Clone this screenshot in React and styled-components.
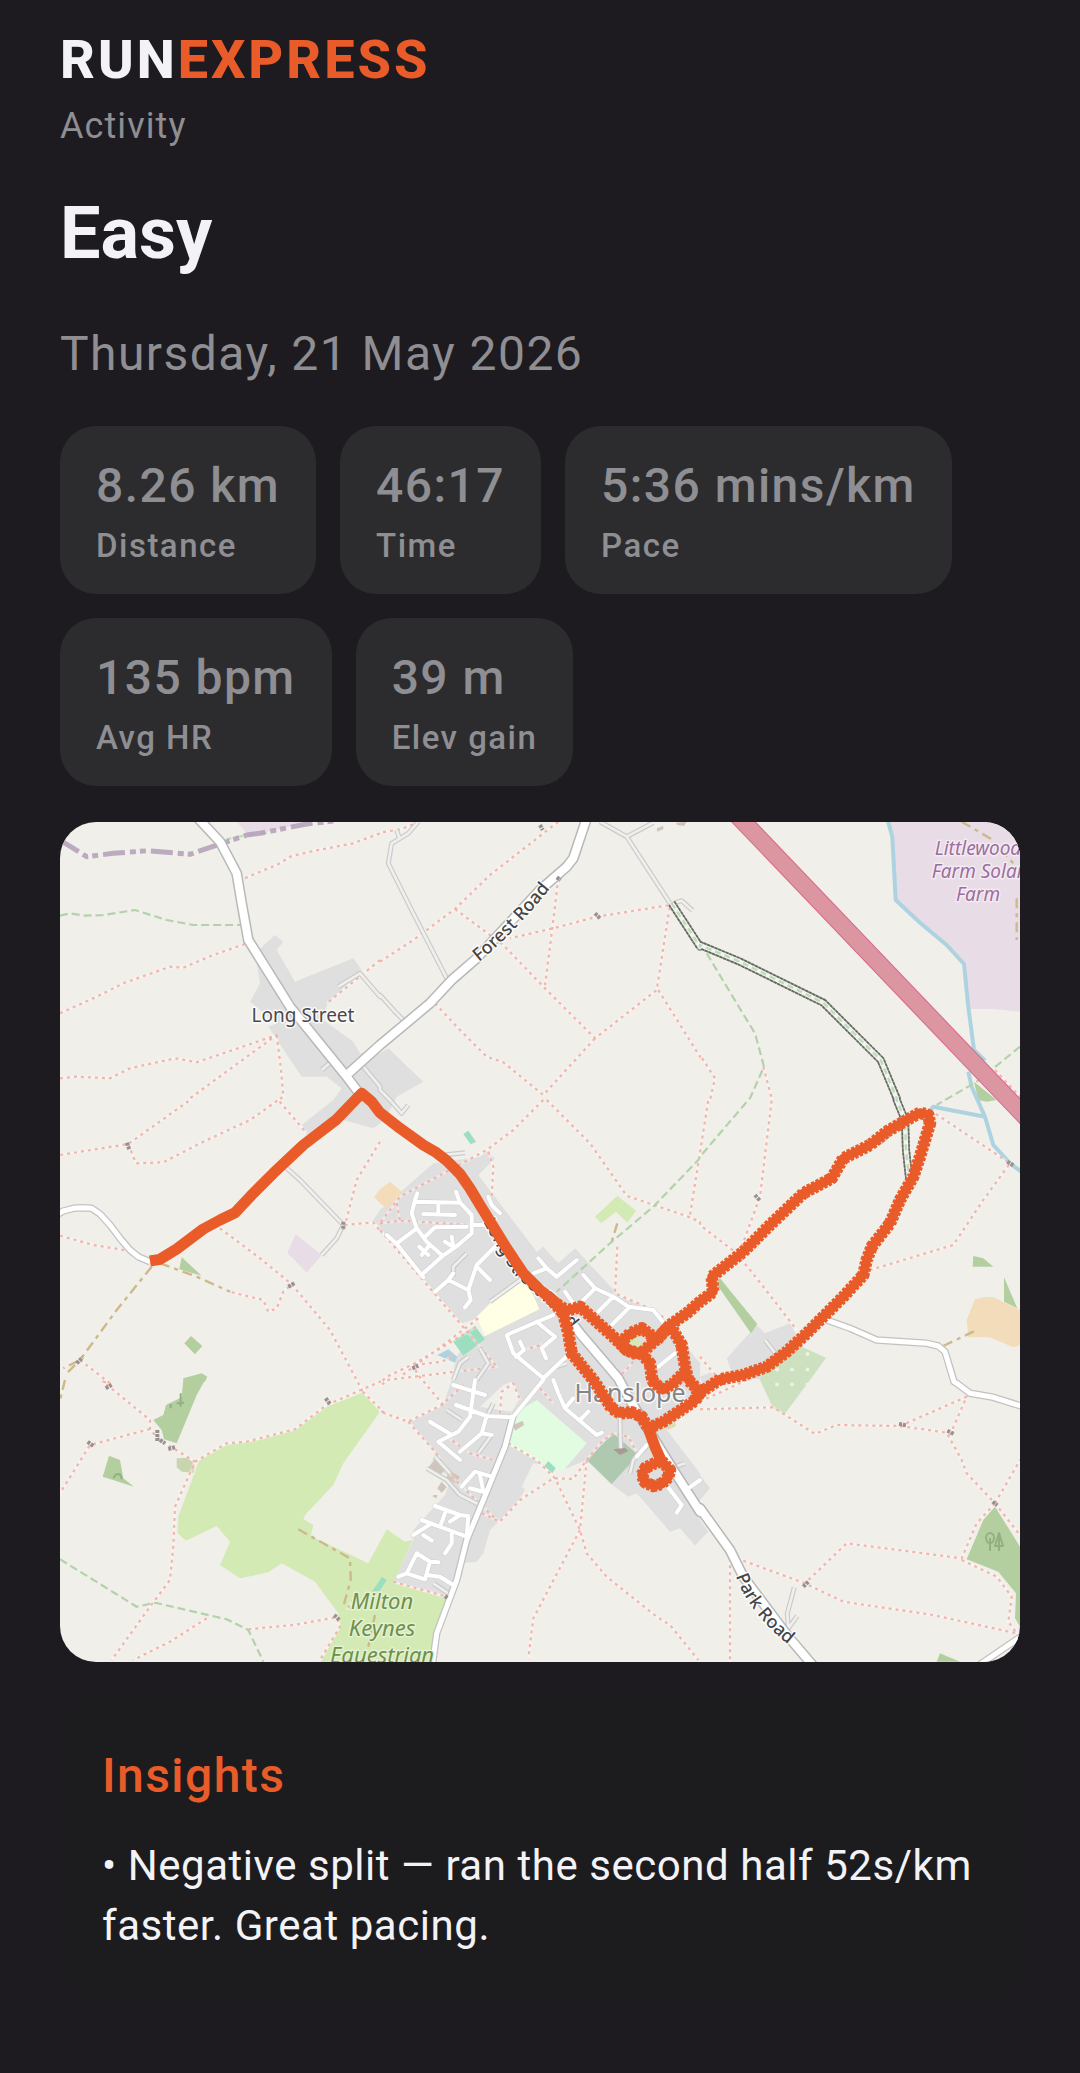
import React from "react";
import styled, { createGlobalStyle } from "styled-components";

const color = {
  page: "#1e1b20",
  chip: "#2c2c2e",
  panel: "#1c1c1e",
  text: "#f2f2f7",
  muted: "#8e8e93",
  accent: "#e95b29",
};

const GlobalStyle = createGlobalStyle`
  * { box-sizing: border-box; }
  body {
    margin: 0;
    background: ${color.page};
    color: ${color.text};
    font-family: Roboto, "Liberation Sans", sans-serif;
  }
  h1, h2, p, dl, dd, dt { margin: 0; font-weight: inherit; }
`;

const Page = styled.main`
  display: flex;
  flex-direction: column;
  gap: 36px;
  padding: 24px 60px 72px;
`;

const Header = styled.header`
  display: flex;
  flex-direction: column;
  gap: 6px;
`;

const Brand = styled.p`
  && { font-weight: 800; }
  font-size: 54px;
  line-height: 72px;
  letter-spacing: 3px;
`;

const BrandAccent = styled.span`
  color: ${color.accent};
`;

const Section = styled.p`
  color: ${color.muted};
  font-size: 36px;
  line-height: 48px;
  letter-spacing: 0.03em;
`;

const Title = styled.h1`
  && { font-weight: 700; }
  font-size: 72px;
  line-height: 96px;
`;

const DateLine = styled.p`
  color: ${color.muted};
  font-size: 48px;
  line-height: 72px;
  letter-spacing: 0.03em;
`;

const Stats = styled.dl`
  display: flex;
  flex-wrap: wrap;
  gap: 24px;
`;

const Stat = styled.div`
  display: flex;
  flex-direction: column-reverse;
  padding: 24px 36px;
  border-radius: 36px;
  background: ${color.chip};
  color: ${color.muted};
`;

const StatValue = styled.dd`
  && { font-weight: 500; }
  font-size: 48px;
  line-height: 72px;
  letter-spacing: 0.03em;
`;

const StatLabel = styled.dt`
  && { font-weight: 500; }
  font-size: 33px;
  line-height: 48px;
  letter-spacing: 0.045em;
`;

const MapFrame = styled.figure`
  margin: 0;
  border-radius: 36px;
  overflow: hidden;
  background: #f0efe9;
`;

const MapDrawing = styled.svg`
  display: block;
  width: 100%;
  height: auto;
  fill: none;
  stroke-linejoin: round;
`;

const Place = styled.text`
  font-family: "Noto Sans", "Open Sans", sans-serif;
  font-size: ${(p) => p.$size}px;
  font-style: ${(p) => (p.$italic ? "italic" : "normal")};
  font-weight: ${(p) => (p.$road ? 500 : 400)};
  fill: ${(p) => p.$ink};
  stroke: ${(p) => p.$halo || "#ffffffcc"};
  stroke-width: 3px;
  paint-order: stroke;
`;

const Insights = styled.section`
  display: flex;
  flex-direction: column;
  gap: 24px;
  padding: 42px;
  border-radius: 36px;
  background: ${color.panel};
`;

const InsightsTitle = styled.h2`
  && { font-weight: 500; }
  color: ${color.accent};
  font-size: 48px;
  line-height: 72px;
  letter-spacing: 0.03em;
`;

const Insight = styled.p`
  font-size: 42px;
  line-height: 60px;
  letter-spacing: 0.013em;
`;

/* The map is surveyed on nine sheets, each in thirds of a map unit.
   A letter in a trace switches the sheet that the points after it are on. */
const sheets = {
  A: [0, -2], B: [320, -2], C: [640, -2],
  D: [0, 278], E: [320, 278], F: [640, 278],
  G: [0, 558], H: [320, 558], I: [640, 558],
};

function trace(source, closed) {
  let origin = sheets.A;
  const points = [];
  source.trim().split(/\s+/).forEach((word) => {
    if (sheets[word]) {
      origin = sheets[word];
      return;
    }
    const [x, y] = word.split(",").map(Number);
    points.push(`${Math.round(origin[0] * 10 + (x * 10) / 3) / 10} ${Math.round(origin[1] * 10 + (y * 10) / 3) / 10}`);
  });
  return `M${points.join("L")}${closed ? "Z" : ""}`;
}

const many = (list, closed) => list.map((s) => trace(s, closed)).join("");

const areas = [
  ["#dfdfdf", [
    "A 645,345 670,365 650,390 705,485 880,415 905,450 800,555 790,600 880,665 900,700 960,700 B 25,685 130,785 50,830 D 975,60 940,85 850,60 740,105 725,75 820,0 A 845,805 800,770 725,770 625,620 650,610 570,545 600,490 585,400",
    "D 940,360 E 0,330 160,190 300,170 320,155 345,175 295,225 470,455 490,440 535,490 585,445 720,590 830,630 960,790 H 960,30 860,150 960,280 I 0,285 30,325 0,360 0,420 25,455 0,480 H 945,497 900,445 870,455 770,340 745,350 690,310 620,240 560,265 460,250 425,320 435,330 410,370 330,450 310,520 290,545 245,550 205,650 40,605 100,480 100,450 195,345 215,290 150,260 165,220 90,125 190,75 215,0 E 230,770 250,740 320,705 295,655 245,670 30,420",
    "F 80,775 170,675 195,700 270,670 310,740 200,840 100,830",
    "F 0,830 35,815 45,840 10,860",
  ]],
  ["#f0efe9", ["H 300,80 370,15 395,5 420,55 395,95"]],
  ["#e8dce6", [
    "C 568,0 960,0 960,575 880,567 810,567 805,500 790,430 585,240 580,60",
    "A 530,5 740,5 650,30 565,45",
    "D 707,403 785,465 740,518 682,458",
  ]],
  ["#d3eab5", [
    "G 908,38 960,95 850,250 820,315 735,405 730,418 760,435 752,468 925,550 960,485 H 20,448 75,485 98,480 40,608 198,655 160,850 G 780,850 840,740 835,700 765,605 665,550 625,577 540,595 480,555 510,485 470,438 420,462 378,482 352,458 355,410 418,240 500,195 600,180 705,150 800,80",
    "E 712,287 768,332 742,368 708,335 664,370 645,350",
  ]],
  ["#b3cfa0", [
    "D 365,472 425,527 358,508", "D 393,708 427,738 405,763 373,730",
    "G 370,0 435,0 410,45 350,190 312,178 305,150 280,120 310,105 318,75 365,52", "D 370,835 425,820 442,830 435,845 370,845",
    "G 147,227 180,240 190,295 222,320 128,290",
    "F 60,535 172,672 153,700 48,550", "F 820,468 850,475 880,500 818,500", "F 912,532 952,625 912,605",
    "I 885,380 960,500 960,740 945,715 948,640 895,575 800,538 850,420", "I 720,820 780,845 710,845",
    "C 822,785 890,840 860,845 835,840",
  ]],
  ["#c9d5ae", ["G 350,235 385,233 405,255 400,278 365,275 350,262"]],
  ["#cde0c0", ["F 300,738 378,773 330,840 I 252,105 220,85 180,0 F 185,825"]],
  ["#f2dcba", ["F 825,598 860,590 880,592 960,630 960,735 940,742 870,712 805,712 800,660", "D 960,270 942,290 960,310 E 20,325 68,278 30,245 -10,275"]],
  ["#ffffe5", ["E 290,650 330,610 345,590 425,540 460,585 478,628 315,708"]],
  ["#e2fce1", ["H 470,60 620,190 550,272 520,270 385,195 405,100"]],
  ["#afc9b0", ["H 700,160 775,225 695,312 620,240"]],
  ["#9ddec1", ["E 285,678 315,718 250,767 218,723", "E 265,92 288,125 272,133 250,102", "H 505,243 527,265 517,280 493,258", "G 960,600 935,635 960,632 H 20,600 5,590"]],
  ["#b0d2de", ["E 172,765 205,748 232,770 225,788"]],
  ["#d0c4bb", [
    "H 170,235 200,265 180,285 145,262", "H 205,270 240,290 225,310 200,295", "H 185,305 200,322 185,338 172,325",
    "H 160,345 172,345 170,355 158,350", "H 400,135 428,122 432,135 405,152",
    "B 830,25 850,18 850,28 832,35", "B 888,8 920,5 912,18 892,15",
  ]],
  ["#ab9a90", ["H 700,208 735,203 745,213 720,225"]],
  ["#e2dcb0", ["H 860,138 885,125 888,138 865,150"]],
  ["#d3eab6", ["E 745,728 765,708 795,738 765,748"]],
];

const footpaths = [
  "A 555,175 600,155 650,135 695,108 760,93 880,70 960,40 B 0,38 60,28 110,10",
  "A 0,580 110,530 190,490 330,440 370,443 460,405 555,372",
  "A 0,775 50,770 150,775 210,745 345,715 410,727 650,645 390,835 D 390,0 205,132 0,165",
  "A 650,645 662,740 670,830 655,840 D 655,0 740,100",
  "D 205,132 228,190 310,187 430,125 570,60 655,0",
  "A 960,420 905,465 800,550", "B 0,425 100,360 225,267 330,165 535,5",
  "B 225,267 370,375 490,500 645,655 830,510 870,255 650,290 520,325 390,355",
  "B 535,175 515,340 495,495", "B 835,510 960,710 C 0,705 45,775 30,840 F 25,0 -5,190",
  "B 165,550 235,625 320,710 370,727 490,825 645,655", "E 490,0 400,90 320,150 60,290 0,370",
  "E 500,0 630,130 740,287 925,350 960,365 F 0,375 110,460 190,560 290,690",
  "E 955,190 930,345", "E 325,155 340,200 335,290", "E 712,440 705,580 820,630 860,660",
  "C 190,740 215,835 F 215,0 180,290 125,440",
  "D 960,125 890,240 855,375 940,367 965,400", "E 0,370 60,362 270,375", "E 50,310 60,362",
  "E 0,390 240,670 350,800 H 20,0 0,20",
  "D 0,407 100,435 205,452", "D 480,385 600,475 695,553 810,690 890,840 G 890,0 908,35",
  "D 515,577 610,600 625,635 650,625 670,575 695,553",
  "D 60,780 150,850 G 130,5 270,120 270,150 300,180 405,245 345,380 340,500 330,600 270,680 155,840",
  "G 270,147 90,195 0,340", "G 405,245 500,190 560,185 705,148 800,75 960,5 H 0,10 E 20,830 105,790 290,680",
  "G 908,35 970,95 H 0,95 85,125 185,75 250,15", "H 85,125 165,215 215,290 350,420",
  "E 295,655 150,765 60,830", "E 105,795 185,785 215,770", "H 190,75 110,-20 105,-40",
  "G 565,748 700,735 830,712 840,740 780,840", "G 440,715 330,785 220,840",
  "G 890,640 860,690", "H 40,605 200,650", "H 305,400 360,425 420,360 520,295 580,297 620,240 600,450 460,715 445,835",
  "H 385,190 470,240 525,295 600,450 620,520 680,590 830,710 870,735 955,840",
  "H 620,240 665,185 700,160 745,170 775,225",
  "H 360,100 365,35 400,10 420,60", "H 200,170 270,220 340,240",
  "I 0,88 220,82 345,162 410,135 600,138 740,158 785,240 800,280 885,370 960,465",
  "I 600,138 800,50 750,165", "I 885,370 960,240", "I 885,370 830,430 785,535 440,490 315,610",
  "I 90,535 90,850", "I 110,535 315,610 430,665 700,705 950,760 925,725 935,650 890,590 785,540",
  "F 690,30 930,190 850,300 760,435 510,510", "C 885,750 960,830", "F 0,770 50,830 I 0,65 140,0",
  "E 760,785 715,835", "H 480,25 520,70", "E 430,750 500,730",
];

const farmTracks = [
  "D 275,500 170,630 60,780 10,805", "D 300,490 410,530 510,575", "G 15,0 0,60", "D 45,795 20,820",
  "G 715,448 870,535 872,600 850,680", "G 945,705 925,800", "C 785,5 870,55 940,130", "C 950,235 950,360",
  "F 730,738 830,690", "E 712,370 695,425",
];

const bridleways = [
  "A 0,287 30,280 75,287 130,285 225,270 320,300 400,315 540,315",
  "C 20,400 110,550 165,640 192,740 150,835 F 145,0 0,170 E 955,180 820,320 690,430 530,575",
  "C 960,680 830,785 735,840 F 710,15",
  "G 0,538 230,680 285,668 500,718 565,750 610,845",
];

const lanes = [
  "B 115,5 85,40 35,70 25,130 100,280 200,475", "B 50,30 60,60", "A 835,500 900,460 960,530 B 0,525 45,575 70,600",
  "B 660,5 740,50 870,250", "B 740,50 820,8", "B 880,250 905,242 938,272",
  "D 680,205 720,240 850,375 830,415 785,465", "I 283,622 262,700 265,745 292,708",
  "A 910,740 960,800 B 0,810 30,840 E 65,40 85,15", "A 785,750 820,720", "E 190,165 255,158",
  "F 195,720 230,765", "E 260,460 220,500 220,530", "E 330,605 420,540", "H 165,230 210,280",
  "H 140,265 200,300 240,345 300,375", "H 200,90 245,120", "H 340,70 320,110", "H 295,220 335,165",
  "E 220,840 240,790 265,770", "E 290,840 325,790 300,745", "E 530,800 560,790", "H 750,280 760,240 805,195",
  "H 885,260 915,250", "H 720,110 722,205", "H 160,610 205,640",
];

const streets = [
  "E 112,280 105,300 95,340 110,385 50,430", "E 105,305 240,308 275,345 275,400 235,435 185,470 130,520",
  "E 228,275 240,308", "E 175,310 175,340", "E 130,342 225,345", "E 20,405 50,432 130,532", "E 110,385 140,425 185,465",
  "E 135,410 165,382 260,380", "E 275,375 320,375", "E 118,440 145,465", "E 125,465 145,440", "E 195,425 220,440 215,410",
  "E 350,435 290,495 265,570 205,540 165,575", "E 290,500 330,540", "E 205,540 220,520", "E 265,570 272,600 255,622",
  "E 325,290 335,315 360,340", "E 460,520 500,505 530,530 590,480", "E 475,475 500,505",
  "E 610,525 645,565 700,590 745,620 820,630 860,680", "E 645,565 600,610", "E 555,575 580,610", "E 700,590 655,635", "E 745,625 695,675",
  "E 885,760 835,800", "E 520,645 380,705 400,760 490,835 H 490,0 400,110",
  "E 470,665 525,710 485,745 498,775", "E 420,725 432,750 408,770", "E 490,835 570,760",
  "H 520,0 535,40 555,85 650,165 665,158", "H 555,85 580,55", "H 600,120 625,95",
  "H 220,15 315,45", "H 285,0 270,110 235,155 175,185 240,240", "H 228,75 320,108 395,112", "H 150,125 215,165",
  "H 320,108 305,160 240,215", "H 305,160 335,165",
  "H 335,290 285,275 245,320", "H 300,285 310,335 270,325", "H 165,378 240,405 265,408 260,470", "H 125,420 260,470",
  "H 195,400 180,440", "H 100,465 155,430", "H 130,465 155,482", "H 215,460 215,490 195,520", "H 240,405 210,425",
  "H 55,590 80,580 110,520 150,545 135,598 80,580", "H 150,545 175,547", "H 140,585 180,590 220,615",
  "H 855,310 905,375 890,398", "H 800,195 770,230", "H 925,325 960,300",
];

const tertiary = [
  "D -20,350 10,333 40,325 70,323 95,325 120,342 150,375 180,415 210,450 235,470 270,485",
  "F 380,660 450,685 530,720 680,730 715,738 735,755 762,845 I 770,10 810,40 880,52 970,80",
  "I 830,860 970,765",
  "H 400,105 375,200 310,360 260,480 230,600 170,760 155,870",
];

const mainRoads = [
  "A 405,-15 480,65 530,160 545,250 565,360 690,560 860,770 905,830",
  "A 860,765 B 0,675 150,550 215,480 290,415 480,210 560,140 580,115 620,-5",
  "E 540,620 600,700 715,835 H 750,60 880,270 960,395 I 0,385 90,510 130,590 265,770 350,870",
];

const streams = [
  "C 563,0 577,50 587,240 660,308 740,375 792,432 805,560 822,690 855,722",
  "C 805,755 815,800 835,845 F 855,50 880,135 930,190 970,220", "F 855,50 700,20 680,45", "F 600,75 540,130",
];

const stiles = [
  "B 480,15 488,30", "B 645,280 660,295", "B 530,172 542,180", "D 200,128 208,148", "D 685,560 705,548", "D 50,790 68,772",
  "D 850,365 850,390", "F 165,285 180,302", "F 922,185 942,197", "G 83,185 102,200", "G 292,150 292,185", "G 300,180 315,190",
  "G 325,207 345,202", "G 137,25 155,15", "G 797,55 810,72", "G 823,705 840,722", "I 597,132 620,136", "I 742,152 762,162",
  "I 878,365 892,376", "I 310,620 325,605", "E 97,805 115,797", "H 195,648 203,655",
];

const wood = ["G 332,72 332,85", "G 362,40 362,80", "G 350,70 372,68", "G 160,295 168,283 180,283 186,298"];

const sharpRoute = [
  "D 270,483 300,478 350,447 430,387 480,360 525,338 580,280 640,220 730,135 830,58 905,-20 935,5 E 0,38 60,85 130,135 165,155 200,182 240,222 270,265 300,315 340,380 380,445 430,520 480,570 530,610",
  "H 805,145 825,200 845,245",
];

const tickedRoute = [
  "E 510,595 550,640 565,700 575,760 640,840 H 650,15 695,85 720,100 755,97 785,110 805,145",
  "H 845,243 870,270 865,292 845,312 820,318 795,307 785,285 797,263 820,252 845,243",
  "H 805,145 850,125 945,62 955,30 925,0 E 915,800 905,735 870,675",
  "H 945,62 I 0,38 F 60,838 130,825 200,800 260,755 320,700 380,640 430,590 490,525 500,480 515,440 570,370 600,300 640,230 660,170 690,70 685,45 660,38 620,60 560,95 510,135 430,175 395,235 310,280 210,375 130,455 35,530 40,575 0,605 E 920,640 870,675 830,720",
  "E 870,675 830,718 785,758 770,763 740,750 722,728 750,700 785,685 830,718",
  "E 530,612 560,632 600,620 650,665 700,710 740,750 785,762 810,790 815,830 H 820,5 848,30 880,10 915,-25",
];

const orchardDots = [[747.5, 532], [732, 547.5], [747.5, 547.5], [717, 547.5], [717, 562.5], [732, 562.5], [747.5, 562.5]];

function RouteMap() {
  const main = many(mainRoads);
  const minor = many(tertiary);
  const side = many(streets);
  const lane = many(lanes);
  const paths = many(footpaths);
  const track = trace("B 875,250 960,380 C 0,375 120,425 370,548 542,720 590,835 F 590,0 615,60 618,150 628,240");
  const motorway = trace("C 105,-21 1100,1020");
  const sharp = many(sharpRoute);
  const ticked = many(tickedRoute);
  const boundary = trace("A 0,60 80,110 160,100 265,92 390,103 560,45 600,40 740,12 830,2");
  return (
    <MapFrame>
      <MapDrawing viewBox="0 0 960 840" role="img" aria-label="Route of the run around Hanslope">
        {areas.map(([fill, shapes]) => (
          <path key={fill} fill={fill} d={many(shapes, true)} />
        ))}
        {orchardDots.map(([x, y]) => (
          <circle key={`${x}-${y}`} cx={x} cy={y} r="2" fill="#e9f4e0" />
        ))}
        <path d={trace("A 620,38 560,45 500,58")} stroke="#bcdcae" strokeWidth="2" strokeDasharray="7 5" />
        <path d={boundary} stroke="#b39fb8" strokeWidth="5" strokeDasharray="22 5 6 4 6 5" opacity=".85" />
        <path d={many(streams)} stroke="#aed3e0" strokeWidth="4" />
        <path d={paths} stroke="#ffffff" strokeOpacity=".35" strokeWidth="3" />
        <path d={paths} stroke="#f3b4ab" strokeWidth="2.2" strokeDasharray="3 4" />
        <path d={many(farmTracks)} stroke="#cdb98a" strokeWidth="2.4" strokeDasharray="10 5 4 5" />
        <path d={many(bridleways)} stroke="#b2d3a9" strokeWidth="2.2" strokeDasharray="8 4" />
        <path d={lane} stroke="#cbcbcb" strokeWidth="5" />
        <path d={lane} stroke="#efefee" strokeWidth="2.6" />
        <path d={side} stroke="#cfcfcf" strokeWidth="5" strokeLinecap="round" />
        <path d={minor} stroke="#c2c2c2" strokeWidth="7.5" />
        <path d={main} stroke="#b8b8b8" strokeWidth="11" />
        <path d={side} stroke="#ffffff" strokeWidth="4" strokeLinecap="round" />
        <path d={minor} stroke="#ffffff" strokeWidth="5" />
        <path d={main} stroke="#ffffff" strokeWidth="8" />
        <path d={track} stroke="#9a9d96" strokeWidth="8" />
        <path d={track} stroke="#666962" strokeWidth="8" strokeDasharray="3 1" />
        <path d={track} stroke="#f3f4f0" strokeWidth="4.6" />
        <path d={track} stroke="#bfdcb8" strokeWidth="2.4" strokeDasharray="6 4" />
        <path d={motorway} stroke="#d9668b" strokeWidth="18" />
        <path d={motorway} stroke="#dc96a2" strokeWidth="16" />
        <path d={many(stiles)} stroke="#9a9090" strokeWidth="4" strokeDasharray="3 1" />
        <path d={many(wood)} stroke="#93b083" strokeWidth="2" />
        <g stroke="#93b083" strokeWidth="2">
          <ellipse cx="930" cy="716" rx="4" ry="5" />
          <path d="M930 716V729M939 729V711M939 711L935 724H943Z" />
        </g>

        <path id="forest-road" d="M419 140Q454 111 488 69" />
        <path id="park-road" d="M676 754Q689 793 734 827" />
        <path id="street-road" d={trace("E 310,365 357,452 402,523 476,592 535,640 590,710")} />
        <Place $size={18} $road $ink="#454545"><textPath href="#forest-road">Forest Road</textPath></Place>
        <Place $size={18} $road $ink="#454545"><textPath href="#park-road">Park Road</textPath></Place>
        <Place $size={17} $road $ink="#454545"><textPath href="#street-road">Long Street Road</textPath></Place>
        <Place x="243" y="200" textAnchor="middle" $size={19} $ink="#4a4a4a">Long Street</Place>
        <Place x="570" y="580" textAnchor="middle" $size={25} $ink="#858585">Hanslope</Place>
        <Place textAnchor="middle" $size={19} $italic $ink="#9b6f9c" $halo="#f4ebf3">
          <tspan x="918" y="33">Littlewood</tspan>
          <tspan x="918" y="56">Farm Solar</tspan>
          <tspan x="918" y="79">Farm</tspan>
        </Place>
        <Place textAnchor="middle" $size={22} $italic $ink="#6f8f4c" $halo="#e3f2d0">
          <tspan x="322" y="787">Milton</tspan>
          <tspan x="322" y="814">Keynes</tspan>
          <tspan x="322" y="841">Equestrian</tspan>
        </Place>

        <g stroke={color.accent}>
          <path d={sharp} strokeWidth="11" />
          <path d={ticked} strokeWidth="9" />
          <path d={ticked} strokeWidth="12.5" strokeDasharray="3.4 1.6" />
        </g>
      </MapDrawing>
    </MapFrame>
  );
}

const stats = [
  ["8.26 km", "Distance"],
  ["46:17", "Time"],
  ["5:36 mins/km", "Pace"],
  ["135 bpm", "Avg HR"],
  ["39 m", "Elev gain"],
];

export default function App() {
  return (
    <>
      <GlobalStyle />
      <Page>
        <Header>
          <Brand>RUN<BrandAccent>EXPRESS</BrandAccent></Brand>
          <Section>Activity</Section>
        </Header>
        <Title>Easy</Title>
        <DateLine>Thursday, 21 May 2026</DateLine>
        <Stats>
          {stats.map(([value, label]) => (
            <Stat key={label}>
              <StatLabel>{label}</StatLabel>
              <StatValue>{value}</StatValue>
            </Stat>
          ))}
        </Stats>
        <RouteMap />
        <Insights>
          <InsightsTitle>Insights</InsightsTitle>
          <Insight>• Negative split — ran the second half 52s/km faster. Great pacing.</Insight>
        </Insights>
      </Page>
    </>
  );
}
